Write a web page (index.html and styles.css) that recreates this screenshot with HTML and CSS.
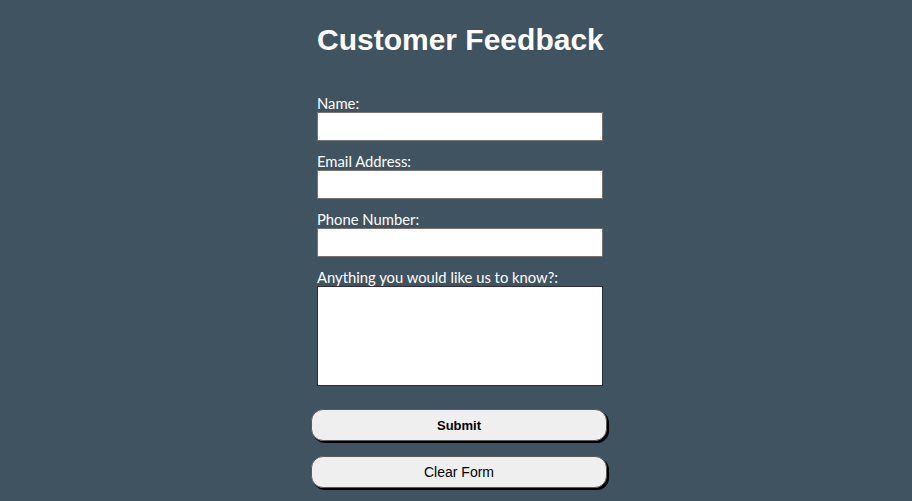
FILE: index.html
```html
<!DOCTYPE html>
<html>
<head>
<meta charset="utf-8">
<title>Customer Feedback</title>
<link rel="stylesheet" href="styles.css">
</head>
<body>
<main class="page">
  <div class="panel">
    <h1 class="title">Customer Feedback</h1>
    <form class="form">
      <label class="label" for="name">Name:</label>
      <input class="field" id="name" type="text">
      <label class="label" for="email">Email Address:</label>
      <input class="field" id="email" type="email">
      <label class="label" for="phone">Phone Number:</label>
      <input class="field" id="phone" type="tel">
      <label class="label" for="msg">Anything you would like us to know?:</label>
      <textarea class="area" id="msg"></textarea>
      <div class="actions">
        <button class="btn btn-submit" type="button">Submit</button>
        <button class="btn btn-clear" type="button">Clear Form</button>
      </div>
    </form>
  </div>
</main>
</body>
</html>
```
FILE: styles.css
```css
html, body {
  margin: 0;
  padding: 0;
  background: #3f5360;
  height: 100%;
}
.page {
  display: flex;
  justify-content: center;
  padding-left: 8px;
}
.panel {
  width: 286px;
  display: flex;
  flex-direction: column;
}
.title {
  font-family: "Liberation Sans", Arial, sans-serif;
  font-weight: bold;
  font-size: 30px;
  line-height: 34px;
  color: #ffffff;
  margin: 23px 0 0 0;
  white-space: nowrap;
}
.form {
  display: flex;
  flex-direction: column;
  margin-top: 37px;
}
.label {
  display: block;
  font-family: "Lato", "Open Sans", sans-serif;
  font-size: 14.8px;
  line-height: 18px;
  color: #ffffff;
  margin-top: 11px;
}
.label:first-child {
  margin-top: 0;
}
.field {
  box-sizing: border-box;
  width: 286px;
  height: 29px;
  margin: 0;
  border: 1px solid #767676;
  background: #ffffff;
  padding: 2px 4px;
}
.area {
  box-sizing: border-box;
  width: 286px;
  height: 100px;
  margin: 0;
  border: 1px solid #2b2b44;
  background: #ffffff;
  resize: none;
  display: block;
}
.actions {
  display: flex;
  flex-direction: column;
  gap: 15px;
  margin: 23px -6px 0 -6px;
}
.btn {
  box-sizing: border-box;
  width: 296px;
  height: 32px;
  border: 1px solid #5a5a5a;
  border-radius: 12px;
  background: #efefef;
  box-shadow: 2px 2px 0 #000000;
  font-family: "Liberation Sans", Arial, sans-serif;
  color: #000000;
  padding: 0;
}
.btn-submit {
  font-size: 13px;
  font-weight: bold;
}
.btn-clear {
  font-size: 14px;
  font-weight: normal;
}
```
